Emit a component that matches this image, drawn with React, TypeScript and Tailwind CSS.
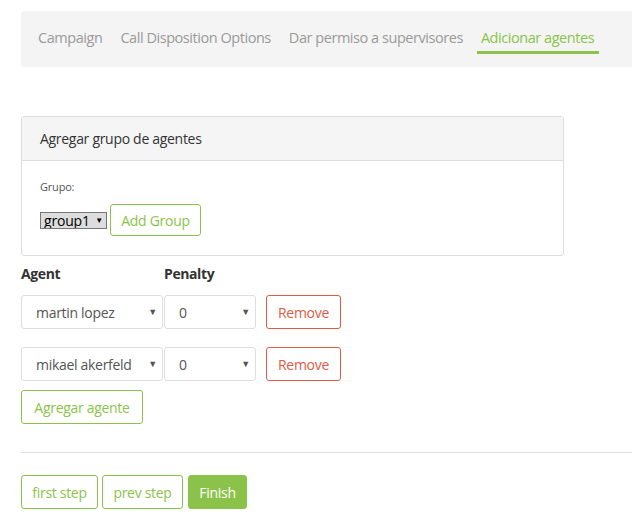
import { useState } from 'react'

const font = { fontFamily: '"Open Sans", "Noto Sans", sans-serif' }

const tabs = ['Campaign', 'Call Disposition Options', 'Dar permiso a supervisores', 'Adicionar agentes']

const agents = ['martin lopez', 'mikael akerfeld']

function Caret() {
  return <span className="pointer-events-none absolute right-[6px] top-1/2 -translate-y-1/2 text-[9px] text-[#555]">▼</span>
}

export default function App() {
  const [rows] = useState(agents)

  return (
    <div className="min-h-[529px] bg-white pl-[21px] pt-[11px] text-[#555] tracking-[-0.2px]" style={font}>
      {/* Tabs */}
      <div className="flex h-[56px] items-start gap-[18px] rounded-l-[4px] bg-[#f4f4f4] pl-[17px] pt-[16px]">
        {tabs.map((t, i) => (
          <div key={t} className="flex flex-col">
            <span className={`text-[14.5px] leading-[21px] tracking-[-0.45px] ${i === 3 ? 'text-[#8bc34a]' : 'text-[#9a9a9a]'}`}>{t}</span>
            {i === 3 && <span className="mt-[3px] h-[3px] w-[122px] -ml-[4px] bg-[#8bc34a]" />}
          </div>
        ))}
      </div>

      {/* Panel */}
      <div className="mt-[49px] w-[543px] rounded-[3px] border border-[#ddd]">
        <div className="flex h-[44px] items-center border-b border-[#ddd] bg-[#f5f5f5] px-[18px] text-[14px] tracking-[-0.3px] text-[#333]">
          Agregar grupo de agentes
        </div>
        <div className="px-[18px] pb-[19px] pt-[19px]">
          <div className="text-[11px] leading-[14px] tracking-[-0.2px] text-[#555]">Grupo:</div>
          <div className="mt-[10px] flex items-center gap-[3px]">
            <div className="relative">
              <select className="h-[17px] w-[67px] appearance-none border border-[#767676] bg-[#ddd] pl-[3px] text-[14px] leading-[15px] text-black">
                <option>group1</option>
              </select>
              <span className="pointer-events-none absolute right-[4px] top-1/2 -translate-y-1/2 text-[8px] text-black">▼</span>
            </div>
            <button className="h-[32px] w-[91px] rounded-[3px] border border-[#8bc34a] text-[14px] tracking-[-0.3px] text-[#8bc34a]">Add Group</button>
          </div>
        </div>
      </div>

      {/* Agents */}
      <div className="mt-[7px] flex text-[14px] font-bold tracking-[-0.4px] text-[#333]">
        <span className="w-[143px]">Agent</span>
        <span>Penalty</span>
      </div>
      <div className="mt-[11px] flex flex-col gap-[18px]">
        {rows.map(a => (
          <div key={a} className="flex items-center">
            <div className="relative">
              <select className="h-[34px] w-[142px] appearance-none rounded-[3px] border border-[#ddd] bg-white pl-[14px] text-[14px] tracking-[-0.3px] text-[#555]">
                <option>{a}</option>
              </select>
              <Caret />
            </div>
            <div className="relative ml-[1px]">
              <select className="h-[34px] w-[92px] appearance-none rounded-[3px] border border-[#ddd] bg-white pl-[14px] text-[14px] text-[#555]">
                <option>0</option>
              </select>
              <Caret />
            </div>
            <button className="ml-[10px] h-[34px] w-[75px] rounded-[3px] border border-[#e05a43] text-[14px] tracking-[-0.3px] text-[#e05a43]">Remove</button>
          </div>
        ))}
      </div>
      <button className="mt-[9px] h-[34px] w-[122px] rounded-[3px] border border-[#8bc34a] text-[14px] tracking-[-0.3px] text-[#8bc34a]">Agregar agente</button>

      <hr className="mt-[28px] border-t border-[#e2e2e2]" />

      <div className="mt-[22px] flex gap-[4px]">
        <button className="h-[34px] w-[77px] rounded-[3px] border border-[#8bc34a] text-[14px] tracking-[-0.3px] text-[#8bc34a]">first step</button>
        <button className="h-[34px] w-[81px] rounded-[3px] border border-[#8bc34a] text-[14px] tracking-[-0.3px] text-[#8bc34a]">prev step</button>
        <button className="ml-[1px] h-[34px] w-[59px] rounded-[3px] border border-[#8bc34a] bg-[#8bc34a] text-[14px] tracking-[-0.3px] text-white">Finish</button>
      </div>
    </div>
  )
}
